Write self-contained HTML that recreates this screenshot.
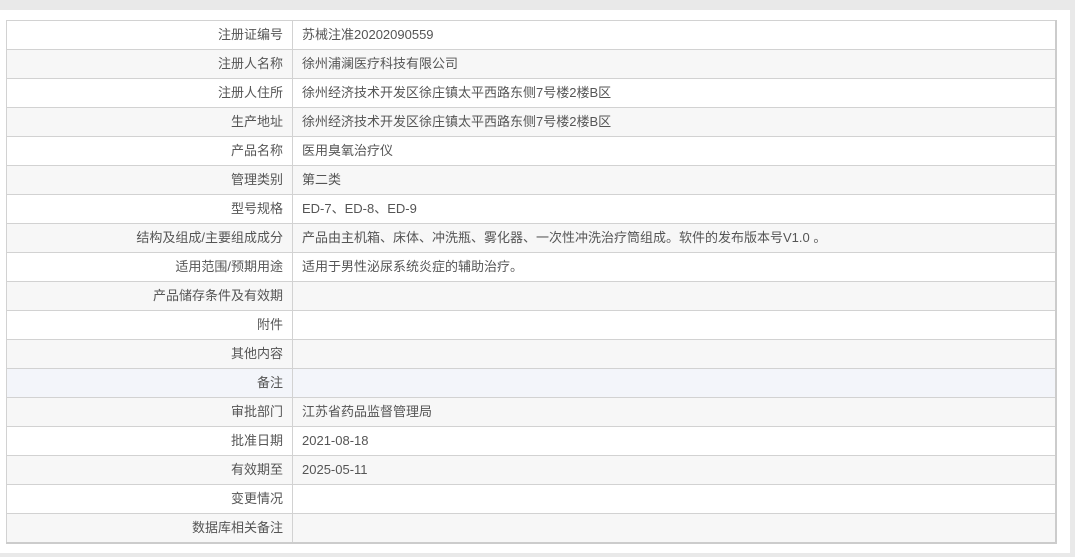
<!DOCTYPE html>
<html><head><meta charset="utf-8"><style>
body{margin:0;background:#e9e9e9;width:1075px;height:557px;overflow:hidden;font-family:"Liberation Sans","Noto Sans CJK SC",sans-serif;}
.panel{position:absolute;left:0;top:10px;width:1070px;height:543px;background:#fff;}
table{position:absolute;left:6px;top:10px;width:1051px;border-collapse:collapse;font-size:13px;color:#555;border-bottom:2px solid #ccc;border-right:2px solid #ccc;}
td{border:1px solid #d2d2d2;height:28px;padding:0 9px;line-height:28px;white-space:nowrap;}
td.l{width:267px;text-align:right;}
tr:nth-child(even) td{background:#f7f7f7;}
tr.h td{background:#f3f5fa;}
</style></head><body>
<div class="panel">
<table>
<tr><td class="l">注册证编号</td><td>苏械注准20202090559</td></tr>
<tr><td class="l">注册人名称</td><td>徐州浦澜医疗科技有限公司</td></tr>
<tr><td class="l">注册人住所</td><td>徐州经济技术开发区徐庄镇太平西路东侧7号楼2楼B区</td></tr>
<tr><td class="l">生产地址</td><td>徐州经济技术开发区徐庄镇太平西路东侧7号楼2楼B区</td></tr>
<tr><td class="l">产品名称</td><td>医用臭氧治疗仪</td></tr>
<tr><td class="l">管理类别</td><td>第二类</td></tr>
<tr><td class="l">型号规格</td><td>ED-7、ED-8、ED-9</td></tr>
<tr><td class="l">结构及组成/主要组成成分</td><td>产品由主机箱、床体、冲洗瓶、雾化器、一次性冲洗治疗筒组成。软件的发布版本号V1.0 。</td></tr>
<tr><td class="l">适用范围/预期用途</td><td>适用于男性泌尿系统炎症的辅助治疗。</td></tr>
<tr><td class="l">产品储存条件及有效期</td><td></td></tr>
<tr><td class="l">附件</td><td></td></tr>
<tr><td class="l">其他内容</td><td></td></tr>
<tr class="h"><td class="l">备注</td><td></td></tr>
<tr><td class="l">审批部门</td><td>江苏省药品监督管理局</td></tr>
<tr><td class="l">批准日期</td><td>2021-08-18</td></tr>
<tr><td class="l">有效期至</td><td>2025-05-11</td></tr>
<tr><td class="l">变更情况</td><td></td></tr>
<tr><td class="l">数据库相关备注</td><td></td></tr>
</table>
</div>
</body></html>
